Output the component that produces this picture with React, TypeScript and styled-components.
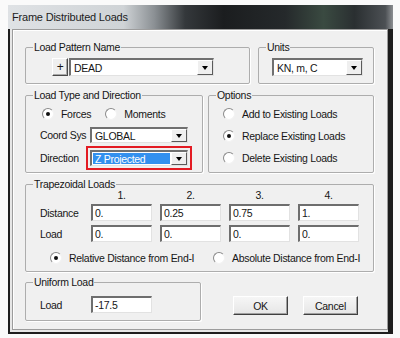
import React from 'react';
import styled, { createGlobalStyle } from 'styled-components';

const Global = createGlobalStyle`
  html, body { margin: 0; padding: 0; background: #fafafa; }
  body {
    width: 400px; height: 338px; overflow: hidden;
    font-family: "Liberation Sans", Arial, sans-serif;
    font-size: 10.5px; letter-spacing: -0.3px; color: #161616;
  }
  * { box-sizing: border-box; }
`;

const Window = styled.div`
  margin: 5px 0 0 8px;
  width: 385px;
  display: flex;
  flex-direction: column;
`;

const TitleBar = styled.div`
  height: 24px;
  display: flex;
  align-items: center;
  padding-left: 4px;
  font-size: 11px;
  letter-spacing: -0.2px;
  color: #1c1c1c;
  background: linear-gradient(
    90deg,
    #dfe2e5 0%,
    #cfd3d6 30%,
    #8b9094 38%,
    #34383b 46%,
    #1b1d1f 56%,
    #25292b 72%,
    #3a4a41 82%,
    #2a2f31 90%,
    #4c5054 98%,
    #8c8f92 100%
  );
`;

const Frame = styled.div`
  display: flex;
  background: #e6e6e6;
  border-left: 2px solid #1e1e1e;
  border-right: 5px solid #1d1d1d;
  border-bottom: 2px solid #1e1e1e;
  padding: 0 0 2px 2px;
`;

const Client = styled.div`
  flex: 1;
  height: 301px;
  background: #f0f0f0;
  border: 1px solid #9c9c9c;
  box-shadow: inset 1px 1px 0 #ffffff;
  padding: 11px 13px 0 12px;
  display: flex;
  flex-direction: column;
  gap: 5px;
`;

const Row = styled.div<{ $gap?: number; $mt?: number }>`
  display: flex;
  align-items: stretch;
  gap: ${p => p.$gap ?? 0}px;
  margin-top: ${p => p.$mt ?? 0}px;
`;

const Group = styled.fieldset<{ $w: number }>`
  margin: 0;
  padding: 0;
  min-width: 0;
  width: ${p => p.$w}px;
  border: 1px solid #adadad;
  border-radius: 2px;
  box-shadow: 1px 1px 0 #ffffff;
`;

const Legend = styled.legend`
  margin-left: 7px;
  padding: 0 1px;
  line-height: 12px;
  font-size: 10.5px;
`;

const GroupBody = styled.div<{ $pad: string; $gap?: number }>`
  padding: ${p => p.$pad};
  display: flex;
  flex-direction: column;
  gap: ${p => p.$gap ?? 0}px;
`;

const InlineRow = styled.div<{ $gap?: number; $h?: number; $ml?: number }>`
  display: flex;
  align-items: center;
  gap: ${p => p.$gap ?? 0}px;
  height: ${p => (p.$h ? `${p.$h}px` : 'auto')};
  margin-left: ${p => p.$ml ?? 0}px;
`;

const FieldGrid = styled.div<{ $cols: string; $mt?: number }>`
  display: grid;
  grid-template-columns: ${p => p.$cols};
  align-items: center;
  margin-top: ${p => p.$mt ?? 0}px;
`;

const TrapGrid = styled.div<{ $mt?: number; $mb?: number }>`
  display: grid;
  grid-template-columns: 43px repeat(4, 61px);
  column-gap: 8px;
  row-gap: 4px;
  align-items: center;
  margin: ${p => p.$mt ?? 0}px 0 ${p => p.$mb ?? 0}px;
`;

const Caption = styled.span`
  line-height: 12px;
  white-space: nowrap;
`;

const ColHead = styled.span`
  text-align: center;
  line-height: 11px;
`;

const Combo = styled.div<{ $w: number; $h: number }>`
  width: ${p => p.$w}px;
  height: ${p => p.$h}px;
  display: flex;
  align-items: stretch;
  background: #ffffff;
  border-style: solid;
  border-width: 2px 1px 1px 2px;
  border-color: #707070 #e2e2e2 #e2e2e2 #707070;
`;

const ComboText = styled.span<{ $sel?: boolean }>`
  flex: 1;
  display: flex;
  align-items: center;
  padding-left: 2px;
  margin: 1px;
  white-space: nowrap;
  background: ${p => (p.$sel ? '#3390ee' : 'transparent')};
  color: ${p => (p.$sel ? '#ffffff' : 'inherit')};
`;

const ArrowBtn = styled.span`
  width: 16px;
  display: flex;
  align-items: center;
  justify-content: center;
  background: #efefef;
  border-style: solid;
  border-width: 1px;
  border-color: #ffffff #5a5a5a #5a5a5a #ffffff;
  &::after {
    content: '';
    width: 0;
    height: 0;
    border-left: 3.5px solid transparent;
    border-right: 3.5px solid transparent;
    border-top: 4px solid #000;
  }
`;

const TextBox = styled.div<{ $h?: number }>`
  width: 100%;
  height: ${p => p.$h ?? 17}px;
  display: flex;
  align-items: center;
  padding-left: 2px;
  background: #ffffff;
  border-style: solid;
  border-width: 2px 1px 1px 2px;
  border-color: #6e6e6e #e2e2e2 #e2e2e2 #6e6e6e;
  white-space: nowrap;
`;

const Highlight = styled.div`
  margin-left: -4px;
  width: fit-content;
  border: 2px solid #e31b23;
  padding: 2px;
`;

const SmallBtn = styled.span`
  width: 16px;
  height: 18px;
  display: flex;
  align-items: center;
  justify-content: center;
  font-size: 12px;
  background: #efefef;
  border-style: solid;
  border-width: 1px;
  border-color: #ffffff #4a4a4a #4a4a4a #ffffff;
  box-shadow: inset -1px -1px 0 #a8a8a8;
`;

const Choice = styled.label`
  display: flex;
  align-items: center;
  gap: 7px;
  white-space: nowrap;
  line-height: 12px;
`;

const Radio = styled.span<{ $on?: boolean }>`
  width: 12px;
  height: 12px;
  border-radius: 50%;
  background: #ffffff;
  border: 1px solid;
  border-color: #8a8a8a #f2f2f2 #f2f2f2 #8a8a8a;
  display: inline-flex;
  align-items: center;
  justify-content: center;
  flex: none;
  &::after {
    content: '';
    width: 4px;
    height: 4px;
    border-radius: 50%;
    background: ${p => (p.$on ? '#111' : 'transparent')};
  }
`;

const ChoiceGrid = styled.div<{ $cols: string; $ml: number }>`
  display: grid;
  grid-template-columns: ${p => p.$cols};
  align-items: center;
  height: 16px;
  margin-left: ${p => p.$ml}px;
`;

const ButtonBar = styled.div`
  display: flex;
  gap: 15px;
  margin: 20px 0 0 32px;
`;

const Button = styled.button`
  width: 55px;
  height: 19px;
  padding: 0;
  font-family: inherit;
  font-size: 10.5px;
  letter-spacing: -0.3px;
  color: #161616;
  background: linear-gradient(#f6f6f6, #e6e6e6);
  border-style: solid;
  border-width: 1px;
  border-color: #ffffff #404040 #404040 #ffffff;
  box-shadow: inset -1px -1px 0 #a0a0a0;
`;

const ChoiceItem: React.FC<{ on?: boolean; children: React.ReactNode }> = ({ on, children }) => (
  <Choice>
    <Radio $on={on} />
    <span>{children}</span>
  </Choice>
);

const headers = ['1.', '2.', '3.', '4.'];
const distances = ['0.', '0.25', '0.75', '1.'];
const loads = ['0.', '0.', '0.', '0.'];

export default function App() {
  return (
    <>
      <Global />
      <Window>
        <TitleBar>Frame Distributed Loads</TitleBar>
        <Frame>
          <Client>
            <Row $gap={8}>
              <Group $w={225}>
                <Legend>Load Pattern Name</Legend>
                <GroupBody $pad="5px 0 7px 26px">
                  <InlineRow $gap={1}>
                    <SmallBtn>+</SmallBtn>
                    <Combo $w={145} $h={18}>
                      <ComboText>DEAD</ComboText>
                      <ArrowBtn />
                    </Combo>
                  </InlineRow>
                </GroupBody>
              </Group>
              <Group $w={116}>
                <Legend>Units</Legend>
                <GroupBody $pad="5px 0 7px 13px">
                  <Combo $w={91} $h={18}>
                    <ComboText>KN, m, C</ComboText>
                    <ArrowBtn />
                  </Combo>
                </GroupBody>
              </Group>
            </Row>

            <Row $gap={5}>
              <Group $w={178}>
                <Legend>Load Type and Direction</Legend>
                <GroupBody $pad="5px 0 2px 14px">
                  <InlineRow $gap={14} $h={16} $ml={2}>
                    <ChoiceItem on>Forces</ChoiceItem>
                    <ChoiceItem>Moments</ChoiceItem>
                  </InlineRow>
                  <FieldGrid $cols="50px auto" $mt={5}>
                    <Caption>Coord Sys</Caption>
                    <Combo $w={98} $h={16}>
                      <ComboText>GLOBAL</ComboText>
                      <ArrowBtn />
                    </Combo>
                  </FieldGrid>
                  <FieldGrid $cols="50px auto" $mt={3}>
                    <Caption>Direction</Caption>
                    <Highlight>
                      <Combo $w={98} $h={16}>
                        <ComboText $sel>Z Projected</ComboText>
                        <ArrowBtn />
                      </Combo>
                    </Highlight>
                  </FieldGrid>
                </GroupBody>
              </Group>
              <Group $w={166}>
                <Legend>Options</Legend>
                <GroupBody $pad="5px 0 4px 14px" $gap={6}>
                  <InlineRow $h={16}>
                    <ChoiceItem>Add to Existing Loads</ChoiceItem>
                  </InlineRow>
                  <InlineRow $h={16}>
                    <ChoiceItem on>Replace Existing Loads</ChoiceItem>
                  </InlineRow>
                  <InlineRow $h={16}>
                    <ChoiceItem>Delete Existing Loads</ChoiceItem>
                  </InlineRow>
                </GroupBody>
              </Group>
            </Row>

            <Row>
              <Group $w={349}>
                <Legend>Trapezoidal Loads</Legend>
                <GroupBody $pad="0 0 5px 14px">
                  <TrapGrid>
                    <span />
                    {headers.map(h => (
                      <ColHead key={h}>{h}</ColHead>
                    ))}
                  </TrapGrid>
                  <TrapGrid $mt={3} $mb={8}>
                    <Caption>Distance</Caption>
                    {distances.map((d, i) => (
                      <TextBox key={`d${i}`}>{d}</TextBox>
                    ))}
                    <Caption>Load</Caption>
                    {loads.map((d, i) => (
                      <TextBox key={`l${i}`}>{d}</TextBox>
                    ))}
                  </TrapGrid>
                  <ChoiceGrid $cols="163px auto" $ml={10}>
                    <ChoiceItem on>Relative Distance from End-I</ChoiceItem>
                    <ChoiceItem>Absolute Distance from End-I</ChoiceItem>
                  </ChoiceGrid>
                </GroupBody>
              </Group>
            </Row>

            <Row $mt={-1}>
              <Group $w={176}>
                <Legend>Uniform Load</Legend>
                <GroupBody $pad="8px 0 7px 14px">
                  <FieldGrid $cols="51px 61px">
                    <Caption>Load</Caption>
                    <TextBox>-17.5</TextBox>
                  </FieldGrid>
                </GroupBody>
              </Group>
              <ButtonBar>
                <Button>OK</Button>
                <Button>Cancel</Button>
              </ButtonBar>
            </Row>
          </Client>
        </Frame>
      </Window>
    </>
  );
}
